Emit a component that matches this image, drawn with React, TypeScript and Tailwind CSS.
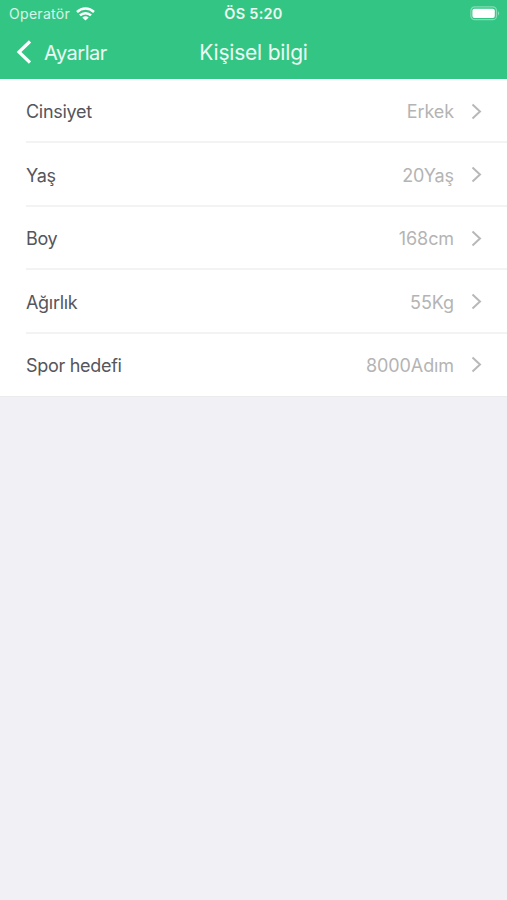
import React from 'react';

interface SettingRow {
    id: string;
    label: string;
    value: string;
}

const rows: SettingRow[] = [
    { id: 'gender', label: 'Cinsiyet', value: 'Erkek' },
    { id: 'age', label: 'Yaş', value: '20Yaş' },
    { id: 'height', label: 'Boy', value: '168cm' },
    { id: 'weight', label: 'Ağırlık', value: '55Kg' },
    { id: 'goal', label: 'Spor hedefi', value: '8000Adım' },
];

const WifiIcon = () => (
    <svg width="19" height="14" viewBox="0 0 19 14" fill="none" stroke="white" strokeWidth="2.5">
        <path d="M1 5C5.8 0.4 13.2 0.4 18 5" />
        <path d="M4 8.4C7.1 5.4 11.9 5.4 15 8.4" />
        <path d="M9.5 13.6L6.3 10.5C8.1 8.8 10.9 8.8 12.7 10.5Z" fill="white" stroke="none" />
    </svg>
);

const BatteryIcon = () => (
    <svg width="31" height="15" viewBox="0 0 31 15" fill="none">
        <rect x="0.9" y="0.9" width="25.6" height="12.8" rx="3.8" stroke="white" strokeOpacity="0.4" strokeWidth="1.2" />
        <rect x="2.4" y="2.7" width="22.4" height="9.2" rx="2" fill="white" />
        <path d="M28 5.2C29.6 5.9 29.6 8.7 28 9.4Z" fill="white" fillOpacity="0.4" />
    </svg>
);

const StatusBar = () => (
    <div className="grid h-[27px] grid-cols-[1fr_auto_1fr] items-center pr-[6px] pl-[9px] text-[14px] leading-[27px]">
        <div className="flex items-center gap-[6px]">
            <span className="tracking-[0.3px] text-white/80">Operatör</span>
            <WifiIcon />
        </div>
        <span className="mr-[3px] text-center text-[14.5px] font-semibold tracking-[0.25px] text-white/90">ÖS 5:20</span>
        <div className="flex justify-end">
            <BatteryIcon />
        </div>
    </div>
);

const NavBar = () => (
    <div className="grid h-[52px] grid-cols-3 items-center pb-px">
        <button type="button" className="flex items-center gap-[13px] pl-4 text-[20px] tracking-[-0.5px]">
            <svg className="mb-px" width="15" height="24" viewBox="0 0 15 24" fill="none" stroke="white" strokeWidth="3.2">
                <path d="M14 1.5L3 12L14 22.5" />
            </svg>
            <span className="text-white/90">Ayarlar</span>
        </button>
        <h1 className="text-center text-[21px] tracking-[-0.2px] text-white/90">Kişisel bilgi</h1>
    </div>
);

const App = () => {
    return (
        <div className="min-h-screen bg-[#f0f0f5] font-['Inter',sans-serif]">
            <header className="h-[79px] bg-[#33c583] text-white">
                <StatusBar />
                <NavBar />
            </header>

            <ul className="border-b border-[#ebebee] bg-white pl-[26px]">
                {rows.map((row) => (
                    <li
                        key={row.id}
                        className="flex h-[63.5px] items-center border-b-2 border-[#f3f3f4] pt-[3px] pr-[25px] text-[18px] first:h-16 last:h-[62px] last:border-b-0 last:pt-px"
                    >
                        <span className="flex-1 tracking-[-0.3px] text-[#55555c]">{row.label}</span>
                        <span className="tracking-[-0.1px] text-[#b4b4b4]">{row.value}</span>
                        <svg className="mb-px ml-[17px]" width="11" height="17" viewBox="0 0 11 17" fill="none" stroke="#b8b8b8" strokeWidth="2">
                            <path d="M1.5 1.5L9 8.5L1.5 15.5" />
                        </svg>
                    </li>
                ))}
            </ul>
        </div>
    );
};

export default App;
